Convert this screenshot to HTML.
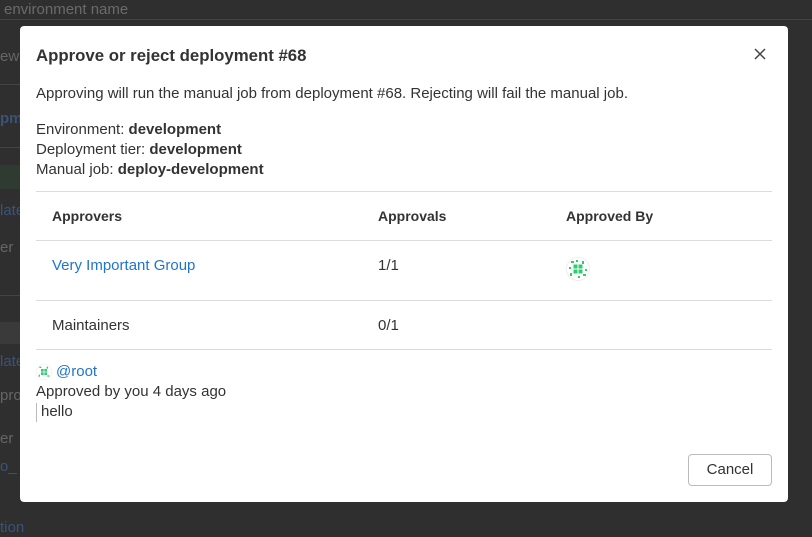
<!DOCTYPE html>
<html><head><style>
body{margin:0;width:812px;height:537px;background:#2f2f2f;font-family:"Liberation Sans","DejaVu Sans",sans-serif;overflow:hidden;position:relative;color:#333}
.bg{position:absolute;color:#666;font-size:15px}
.bl{position:absolute;left:0;width:20px;height:1px;background:#444}
.modal{position:absolute;left:20px;top:26px;width:768px;height:476px;background:#fff;border-radius:4px}
.t{position:absolute;white-space:nowrap;font-size:15px;color:#333}
.b{font-weight:bold}
.ln{position:absolute;left:16px;width:736px;height:1px;background:#dcdcdc}
a{color:#1f75cb;text-decoration:none}
</style></head><body>
<div class="bg" style="left:4px;top:1px;color:#6a6a6a">environment name</div>
<div style="position:absolute;left:0;top:19px;width:812px;height:1px;background:#444"></div>
<div class="bg" style="left:0;top:48px">ew</div>
<div class="bl" style="top:84px"></div>
<div class="bg" style="left:0;top:110px;color:#3a5378;font-weight:bold">pm</div>
<div class="bl" style="top:147px"></div>
<div style="position:absolute;left:0;top:165px;width:20px;height:24px;background:#2f3a30"></div>
<div class="bg" style="left:0;top:202px;color:#3a5378">late</div>
<div class="bg" style="left:0;top:239px">er</div>
<div class="bl" style="top:295px"></div>
<div style="position:absolute;left:0;top:322px;width:20px;height:22px;background:#3a3a3a"></div>
<div class="bg" style="left:0;top:353px;color:#3a5378">late</div>
<div class="bg" style="left:0;top:387px">pro</div>
<div class="bg" style="left:0;top:430px">er</div>
<div class="bg" style="left:0;top:458px;color:#3a5378">o_</div>
<div class="bg" style="left:0;top:519px;color:#3a5378">tion</div>
<div class="modal">
<div class="t b" style="left:16px;top:20px;font-size:16.8px">Approve or reject deployment #68</div>
<svg style="position:absolute;left:734px;top:22px" width="12" height="12" viewBox="0 0 12 12"><path d="M1 1L11 11M11 1L1 11" stroke="#444" stroke-width="1.5"/></svg>
<div class="t" style="left:16px;top:59px">Approving will run the manual job from deployment #68. Rejecting will fail the manual job.</div>
<div class="t" style="left:16px;top:95px">Environment: <b>development</b></div>
<div class="t" style="left:16px;top:115px">Deployment tier: <b>development</b></div>
<div class="t" style="left:16px;top:135px">Manual job: <b>deploy-development</b></div>
<div class="ln" style="top:165px"></div>
<div class="t b" style="left:32px;top:182px;font-size:14px">Approvers</div>
<div class="t b" style="left:358px;top:182px;font-size:14px">Approvals</div>
<div class="t b" style="left:546px;top:182px;font-size:14px">Approved By</div>
<div class="ln" style="top:214px"></div>
<div class="t" style="left:32px;top:231px"><a>Very Important Group</a></div>
<div class="t" style="left:358px;top:231px">1/1</div>
<svg style="position:absolute;left:546px;top:231px" width="24" height="24" viewBox="0 0 24 24"><circle cx="12" cy="12" r="11.5" fill="#fff" stroke="#eee"/><g fill="#2ecc71"><rect x="7.5" y="7.5" width="4" height="4"/><rect x="12.5" y="7.5" width="4" height="4"/><rect x="7.5" y="12.5" width="4" height="4"/><rect x="12.5" y="12.5" width="4" height="4"/><rect x="5" y="4" width="3" height="2"/><rect x="16" y="4" width="2" height="3"/><rect x="4" y="16" width="2" height="3"/><rect x="17" y="17" width="3" height="2"/><rect x="10" y="3" width="2" height="2"/><rect x="12" y="19" width="2" height="2"/><rect x="3" y="10" width="2" height="2"/><rect x="19" y="12" width="2" height="2"/></g></svg>
<div class="ln" style="top:274px"></div>
<div class="t" style="left:32px;top:291px">Maintainers</div>
<div class="t" style="left:358px;top:291px">0/1</div>
<div class="ln" style="top:323px"></div>
<svg style="position:absolute;left:16px;top:338px" width="16" height="16" viewBox="0 0 24 24"><circle cx="12" cy="12" r="11.5" fill="#fff" stroke="#eee"/><g fill="#2ecc71"><rect x="7.5" y="7.5" width="4" height="4"/><rect x="12.5" y="7.5" width="4" height="4"/><rect x="7.5" y="12.5" width="4" height="4"/><rect x="12.5" y="12.5" width="4" height="4"/><rect x="5" y="4" width="3" height="2"/><rect x="16" y="4" width="2" height="3"/><rect x="4" y="16" width="2" height="3"/><rect x="17" y="17" width="3" height="2"/></g></svg>
<div class="t" style="left:36px;top:337px"><a>@root</a></div>
<div class="t" style="left:16px;top:357px">Approved by you 4 days ago</div>
<div style="position:absolute;left:16px;top:377px;width:1px;height:19px;background:#bbb"></div>
<div class="t" style="left:21px;top:377px">hello</div>
<div style="position:absolute;left:668px;top:428px;width:84px;height:32px;border:1px solid #bbb;border-radius:4px;box-sizing:border-box;font-size:15px;text-align:center;line-height:30px;color:#333">Cancel</div>
</div>
</body></html>
